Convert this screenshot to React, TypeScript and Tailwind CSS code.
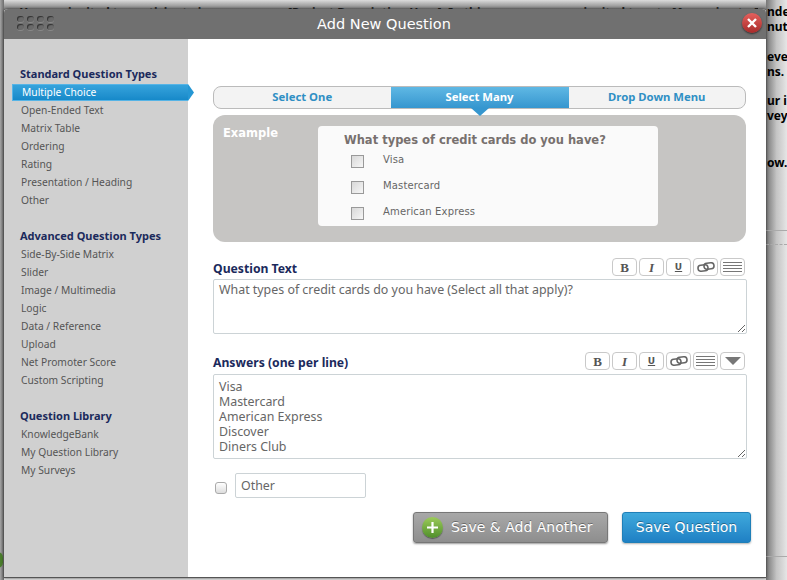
import React from 'react';

const font = { fontFamily: '"DejaVu Sans", sans-serif' };
const noto = { fontFamily: '"Noto Sans", sans-serif' };

const groups = [
  { title: 'Standard Question Types', items: ['Multiple Choice', 'Open-Ended Text', 'Matrix Table', 'Ordering', 'Rating', 'Presentation / Heading', 'Other'] },
  { title: 'Advanced Question Types', items: ['Side-By-Side Matrix', 'Slider', 'Image / Multimedia', 'Logic', 'Data / Reference', 'Upload', 'Net Promoter Score', 'Custom Scripting'] },
  { title: 'Question Library', items: ['KnowledgeBank', 'My Question Library', 'My Surveys'] },
];

function LinesIcon() {
  return (
    <svg width="19" height="11" viewBox="0 0 19 11" stroke="#777" strokeWidth="1">
      <path d="M0 .5h19M0 3.5h19M0 6.5h19M0 9.5h19" />
    </svg>
  );
}

function LinkIcon() {
  return (
    <svg width="18" height="10" viewBox="0 0 18 10" fill="none" stroke="#666" strokeWidth="1.6">
      <rect x="1" y="3" width="10" height="6" rx="3" transform="rotate(-6 6 6)" />
      <rect x="7" y="1" width="10" height="6" rx="3" transform="rotate(-6 12 4)" />
    </svg>
  );
}

function ToolButton({ children }: { children: React.ReactNode }) {
  return (
    <div className="flex h-[18px] w-[25px] items-center justify-center rounded-[4px] border border-[#c9c9c9] bg-white text-[#555]">
      {children}
    </div>
  );
}

function Toolbar({ arrow }: { arrow?: boolean }) {
  return (
    <div className="flex gap-[2px]">
      <ToolButton><span className="text-[13px] font-bold leading-none" style={{ fontFamily: '"Liberation Serif", serif' }}>B</span></ToolButton>
      <ToolButton><span className="text-[13px] font-bold italic leading-none" style={{ fontFamily: '"Liberation Serif", serif' }}>I</span></ToolButton>
      <ToolButton><span className="text-[9px] font-bold leading-none underline" style={font}>U</span></ToolButton>
      <ToolButton><LinkIcon /></ToolButton>
      <ToolButton><LinesIcon /></ToolButton>
      {arrow && (
        <ToolButton>
          <svg width="16" height="8" viewBox="0 0 16 8" fill="#777"><path d="M0 0h16L8 8z" /></svg>
        </ToolButton>
      )}
    </div>
  );
}

function Backdrop() {
  return (
    <div className="absolute inset-0 bg-[#e4e4e4] text-[12px] font-bold leading-[15px] text-black" style={noto}>
      {/* page behind the dialog, mostly hidden */}
      <div className="absolute inset-x-0 top-0 h-[10px] bg-gradient-to-b from-[#dcdcdc] to-[#777]" />
      <div className="absolute left-[20px] top-[5px] whitespace-nowrap text-[#222]">You are invited to participate in a</div>
      <div className="absolute left-[288px] top-[5px] w-[470px] overflow-hidden whitespace-nowrap text-[#222]">[Project Description Here]. In this survey, you are invited to rate [Assuming to Respo</div>
      <div className="absolute inset-y-0 left-0 w-[4px] bg-gradient-to-r from-[#a5a5a5] to-[#6c6c6c]" />
      <div className="absolute inset-y-0 left-[766px] w-[21px] bg-gradient-to-r from-[#777] via-[#c4c4c4] to-[#e6e6e6]" />
      <div className="absolute left-[767px] top-[4px] flex flex-col whitespace-nowrap">
        <div className="h-[15px]">nde</div>
        <div className="h-[30px]">nute</div>
        <div className="h-[15px]">eve</div>
        <div className="h-[29px]">ns.</div>
        <div className="h-[15px]">ur i</div>
        <div className="h-[47px]">vey</div>
        <div>ow.</div>
      </div>
      <div className="absolute left-[766px] top-[230px] h-px w-[21px] bg-[#aaa]" />
      <div className="absolute left-[766px] top-[244px] w-[21px] border-t border-dashed border-[#aaa]" />
      <div className="absolute left-[766px] top-[556px] h-px w-[21px] bg-[#aaa]" />
      <div className="absolute left-[-8px] top-[552px] h-[16px] w-[11px] rounded-full bg-[#4a7d2c]" />
    </div>
  );
}

export default function App() {
  return (
    <div className="relative h-[580px] w-[787px] overflow-hidden" style={font}>
      <Backdrop />

      <div className="relative ml-[4px] mt-[9px] flex h-[569px] w-[762px] flex-col rounded-t-[4px] border-b border-[#555] bg-white shadow-[0_0_3px_rgba(0,0,0,0.7)]">
        {/* title bar */}
        <div className="relative flex h-[30px] shrink-0 items-center justify-center rounded-t-[4px] bg-[#707070] pr-[2px] pt-[2px]">
          <span className="text-[14.5px] text-white">Add New Question</span>
          <div className="absolute left-[13px] top-[7px] grid grid-cols-4 gap-x-[3px] gap-y-[2px]">
            {Array.from({ length: 8 }).map((_, i) => (
              <div key={i} className="h-[6px] w-[7px] rounded-full bg-[#6a6a6a] shadow-[inset_1px_1px_1px_#333,0_1px_0_#888]" />
            ))}
          </div>
          <div className="absolute left-[738px] top-[4px] flex h-[20px] w-[20px] items-center justify-center rounded-full bg-gradient-to-b from-[#e5605d] to-[#a82a2a] shadow-[0_1px_2px_rgba(0,0,0,0.6)]">
            <svg width="10" height="10" viewBox="0 0 10 10" stroke="#fff" strokeWidth="2.4"><path d="M1 1l8 8M9 1l-8 8" /></svg>
          </div>
        </div>

        <div className="flex flex-1">
          {/* sidebar */}
          <div className="flex w-[184px] shrink-0 flex-col gap-[18px] bg-[#d0d0d0] pt-[26px]" style={noto}>
            {groups.map((g) => (
              <div key={g.title}>
                <div className="pl-[16px] text-[11px] font-bold leading-[18px] text-[#1b2a5c]">{g.title}</div>
                {g.items.map((item) =>
                  item === 'Multiple Choice' ? (
                    <div key={item} className="relative ml-[8px] mt-px flex h-[17px] w-[176px] items-center border-y border-l border-[#56b4e6] bg-gradient-to-b from-[#35a3dc] to-[#1689c9] pl-[9px] text-[10.25px] text-white">
                      {item}
                      <svg className="absolute left-[175px] top-[-1px]" width="6" height="17" viewBox="0 0 6 17" fill="#2597d4"><path d="M0 0l6 8.5-6 8.5z" /></svg>
                    </div>
                  ) : (
                    <div key={item} className="flex h-[18px] items-center pl-[17px] pt-[2px] text-[10.25px] text-[#555]">{item}</div>
                  ),
                )}
              </div>
            ))}
          </div>

          {/* main */}
          <div className="flex flex-1 flex-col pl-[25px] pr-[19px] pt-[47px]">
            <div className="flex h-[23px] w-[533px] rounded-[8px] border border-[#bbb] bg-[#f3f3f3] text-[11.3px] font-bold text-[#2f8fc4]" style={noto}>
              <div className="flex flex-1 items-center justify-center">Select One</div>
              <div className="relative flex w-[178px] items-center justify-center bg-gradient-to-b from-[#5fb8e4] to-[#3596cf] text-white">
                Select Many
                <div className="absolute left-[80px] top-[21px] h-0 w-0 border-x-[9px] border-t-[8px] border-x-transparent border-t-[#3596cf]" />
              </div>
              <div className="flex flex-1 items-center justify-center">Drop Down Menu</div>
            </div>

            <div className="mt-[6px] flex h-[127px] w-[533px] rounded-[12px] bg-[#c6c5c3] pl-[10px] pt-[11px]">
              <div className="w-[95px] text-[11.5px] font-bold leading-[14px] text-white">Example</div>
              <div className="h-[100px] w-[340px] rounded-[4px] bg-[#fafafa] pl-[26px] pt-[6px]">
                <div className="text-[11.5px] font-bold leading-[16px] text-[#77706e]">What types of credit cards do you have?</div>
                <div className="flex flex-col">
                  {['Visa', 'Mastercard', 'American Express'].map((c) => (
                    <div key={c} className="flex h-[26px] items-center pl-[7px]">
                      <div className="h-[13px] w-[13px] border border-[#999] bg-gradient-to-br from-[#d8d8d8] to-[#f6f6f6]" />
                      <span className="mb-[4px] ml-[19px] text-[10px] tracking-[0.15px] text-[#666]">{c}</span>
                    </div>
                  ))}
                </div>
              </div>
            </div>

            <div className="mt-[16px] flex h-[21px] w-[532px] items-start justify-between" style={noto}>
              <span className="pt-[3px] text-[12.2px] font-bold leading-[16px] text-[#1b2a5c]">Question Text</span>
              <Toolbar />
            </div>
            <textarea
              readOnly
              defaultValue="What types of credit cards do you have (Select all that apply)?"
              className="h-[55px] w-[534px] rounded-[2px] border border-[#ccd3d6] px-[5px] py-[2px] text-[12.4px] leading-[15px] text-[#666]"
              style={noto}
            />

            <div className="mt-[18px] flex h-[22px] w-[532px] items-start justify-between" style={noto}>
              <span className="pt-[3px] text-[12.2px] font-bold leading-[16px] text-[#1b2a5c]">Answers (one per line)</span>
              <Toolbar arrow />
            </div>
            <textarea
              readOnly
              defaultValue={'Visa\nMastercard\nAmerican Express\nDiscover\nDiners Club'}
              className="h-[85px] w-[534px] rounded-[2px] border border-[#ccd3d6] px-[5px] py-[4px] text-[12.4px] leading-[15px] text-[#666]"
              style={noto}
            />

            <div className="mt-[14px] flex items-center pl-[2px]">
              <div className="mt-[5px] h-[12px] w-[12px] rounded-[3px] border border-[#aaa] bg-gradient-to-b from-white to-[#ddd]" />
              <input
                readOnly
                defaultValue="Other"
                className="ml-[8px] h-[25px] w-[131px] rounded-[2px] border border-[#ccd3d6] px-[5px] text-[12.4px] text-[#666]"
                style={noto}
              />
            </div>

            <div className="-mr-[4px] mt-[14px] flex justify-end gap-[14px]">
              <button className="flex h-[31px] w-[195px] items-center rounded-[3px] border border-[#777] bg-gradient-to-b from-[#a8a8a8] to-[#8e8e8e] pl-[8px] text-[14px] text-white shadow-[0_1px_2px_rgba(0,0,0,0.4)] [text-shadow:0_-1px_0_rgba(0,0,0,0.35)]">
                <span className="flex h-[21px] w-[21px] shrink-0 items-center justify-center rounded-full bg-gradient-to-b from-[#9ccb5a] to-[#4f8f2a] shadow-[0_1px_1px_rgba(0,0,0,0.4)]">
                  <svg width="11" height="11" viewBox="0 0 11 11" stroke="#fff" strokeWidth="2.2"><path d="M5.5 0v11M0 5.5h11" /></svg>
                </span>
                <span className="ml-[8px]">Save &amp; Add Another</span>
              </button>
              <button className="h-[31px] w-[129px] rounded-[3px] border border-[#1f7fb8] bg-gradient-to-b from-[#3fa9dc] to-[#1f80c4] text-[14px] text-white shadow-[0_1px_2px_rgba(0,0,0,0.3)] [text-shadow:0_-1px_0_rgba(0,0,0,0.35)]">
                Save Question
              </button>
            </div>
          </div>
        </div>
      </div>
    </div>
  );
}
